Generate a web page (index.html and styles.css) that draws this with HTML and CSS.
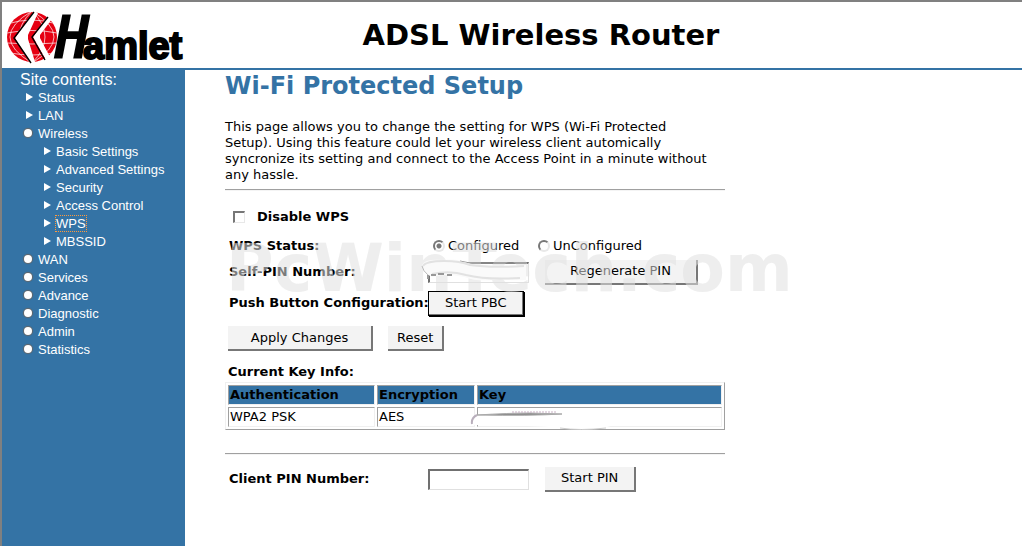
FILE: index.html
```
<!DOCTYPE html>
<html lang="en">
<head>
    <meta charset="UTF-8">
    <meta name="viewport" content="width=device-width, initial-scale=1.0">
    <title>ADSL Wireless Router</title>
    <link rel="stylesheet" href="styles.css">
</head>
<body>
    <header class="top">
        <svg class="logo" width="184" height="58" viewBox="0 0 184 58" role="img" aria-label="Hamlet">
            <defs>
                <clipPath id="globe"><circle cx="30" cy="30" r="25"/></clipPath>
            </defs>
            <g clip-path="url(#globe)">
                <rect x="4" y="4" width="52" height="52" fill="#e60012"/>
                <g fill="none" stroke="#fff" stroke-width="0.7">
                    <path d="M5 17Q30 9 55 17M5 26Q30 21 55 26M5 36Q30 38 55 36M8 46Q30 50 52 46"/>
                    <path d="M30 4Q4 30 30 56M30 4Q-14 30 30 56M30 4Q56 30 30 56M30 4Q74 30 30 56"/>
                </g>
            </g>
            <path d="M32 4L13 31L29 57L33 55L26 32L26 28L36 6Z" fill="#fff"/>
            <path d="M46 9L31 30L44 53L48 50L38 31L38 28L50 12Z" fill="#fff"/>
            <path d="M32 5L12 31L29 56M46 10L30 30L43 53" fill="none" stroke="#000" stroke-width="1.4"/>
            <text><tspan class="logo-h" x="52" y="52">H</tspan><tspan class="logo-rest" x="81" y="52">amlet</tspan></text>
        </svg>
        <h1>ADSL Wireless Router</h1>
    </header>

    <div class="page">
        <nav class="menu">
            <p>Site contents:</p>
            <ul>
                <li class="leaf"><a href="#">Status</a></li>
                <li class="leaf"><a href="#">LAN</a></li>
                <li class="folder"><a href="#">Wireless</a>
                    <ul>
                        <li class="leaf"><a href="#">Basic Settings</a></li>
                        <li class="leaf"><a href="#">Advanced Settings</a></li>
                        <li class="leaf"><a href="#">Security</a></li>
                        <li class="leaf"><a href="#">Access Control</a></li>
                        <li class="leaf"><a class="current" href="#">WPS</a></li>
                        <li class="leaf"><a href="#">MBSSID</a></li>
                    </ul>
                </li>
                <li class="folder"><a href="#">WAN</a></li>
                <li class="folder"><a href="#">Services</a></li>
                <li class="folder"><a href="#">Advance</a></li>
                <li class="folder"><a href="#">Diagnostic</a></li>
                <li class="folder"><a href="#">Admin</a></li>
                <li class="folder"><a href="#">Statistics</a></li>
            </ul>
        </nav>

        <main>
            <h2>Wi-Fi Protected Setup</h2>
            <p class="intro">This page allows you to change the setting for WPS (Wi-Fi Protected<br>
                Setup). Using this feature could let your wireless client automically<br>
                syncronize its setting and connect to the Access Point in a minute without<br>
                any hassle.</p>
            <hr>

            <form>
                <div class="disable">
                    <input type="checkbox" id="disableWps">
                    <label for="disableWps">Disable WPS</label>
                </div>

                <div class="row status">
                    <b>WPS Status:</b>
                    <div class="choice">
                        <input type="radio" name="status" id="configured" checked>
                        <label for="configured">Configured</label>
                    </div>
                    <div class="choice second">
                        <input type="radio" name="status" id="unconfigured">
                        <label for="unconfigured">UnConfigured</label>
                    </div>
                </div>
                <div class="row pin">
                    <label for="selfPin">Self-PIN Number:</label>
                    <div class="smudged">
                        <input type="text" id="selfPin">
                        <svg class="smudge" width="112" height="28" viewBox="0 0 112 28" aria-hidden="true">
                            <path d="M2 8Q4 2 22 3Q38 1 52 7Q80 10 106 8V23Q94 24 80 22Q60 26 44 20Q26 16 12 20Q3 16 2 8Z" fill="#fafafa"/>
                            <path d="M40 4L50 6H106" fill="none" stroke="#999"/>
                            <path d="M3 9Q6 4 24 4Q40 4 50 8Q70 11 104 9M12 17Q30 13 46 18Q66 23 100 21" fill="none" stroke="#e2e2e2" stroke-width="2"/>
                            <path d="M2 9Q3 14 8 18" fill="none" stroke="#bbb"/>
                            <path d="M8 18V22M11 18h5M18 17h6M27 18h5" fill="none" stroke="#999" stroke-width="2"/>
                        </svg>
                    </div>
                    <button type="button" class="wide">Regenerate PIN</button>
                </div>
                <div class="row pbc">
                    <b>Push Button Configuration:</b>
                    <button type="button" class="default">Start PBC</button>
                </div>
                <div class="actions">
                    <button type="button" class="apply">Apply Changes</button>
                    <button type="reset">Reset</button>
                </div>

                <div class="keys">
                    <table>
                        <caption>Current Key Info:</caption>
                        <thead>
                            <tr><th class="auth">Authentication</th><th class="enc">Encryption</th><th>Key</th></tr>
                        </thead>
                        <tbody>
                            <tr><td>WPA2 PSK</td><td>AES</td><td></td></tr>
                        </tbody>
                    </table>
                    <svg class="key-smudge" width="160" height="24" viewBox="0 0 160 24" aria-hidden="true">
                        <path d="M3 18L5 8H110Q136 4 158 10Q140 24 110 22Q60 18 3 18Z" fill="#fff"/>
                        <path d="M2 17Q1 11 7 8" fill="none" stroke="#b9afbc" stroke-width="2"/>
                        <path d="M7 8Q60 9 92 7L60 6Q40 6 7 8Z" fill="#888" stroke="#aaa"/>
                        <path d="M42 5H86" stroke="#c8b0c4" stroke-dasharray="2 1"/>
                        <path d="M90 21Q110 24 136 21" fill="none" stroke="#ccc"/>
                    </svg>
                </div>
                <hr>

                <div class="row client">
                    <label for="clientPin">Client PIN Number:</label>
                    <input type="text" id="clientPin">
                    <button type="button">Start PIN</button>
                </div>
            </form>
            <div class="watermark" aria-hidden="true">PcWinTech.com</div>
        </main>
    </div>
</body>
</html>
```
FILE: styles.css
```
* {
    box-sizing: border-box;
}

body {
    margin: 0;
    min-height: 100vh;
    display: flex;
    flex-direction: column;
    border-top: 2px solid #808080;
    border-left: 2px solid #808080;
    background: #fff;
    color: #000;
    font: 13px/16px Verdana, "DejaVu Sans", sans-serif;
}

.top {
    display: flex;
    align-items: center;
    height: 68px;
    border-bottom: 2px solid #3473a5;
}

.logo {
    flex: none;
    margin-top: 2px;
    overflow: visible;
}

.logo-h {
    font: italic bold 60px "DejaVu Sans Mono", monospace;
}

.logo-rest {
    font: bold 38px "Liberation Sans", sans-serif;
    stroke: #000;
    stroke-width: 2px;
}

h1 {
    flex: 1;
    margin: 0;
    padding-right: 126px;
    text-align: center;
    font-size: 29px;
    line-height: 40px;
}

.page {
    flex: 1;
    display: flex;
}

.menu {
    width: 183px;
    flex: none;
    padding-left: 18px;
    background: #3473a5;
    color: #fff;
    font: 13px/18px "Liberation Sans", Arial, sans-serif;
}

.menu p {
    margin: 0;
    font-size: 16px;
    line-height: 19px;
}

.menu ul {
    margin: 0;
    padding: 0;
    list-style: none;
}

.menu li {
    position: relative;
    padding-left: 18px;
}

.menu a {
    color: #fff;
    text-decoration: none;
}

.menu .current {
    outline: 1px dotted #ff9a3c;
}

.leaf::before,
.folder::before {
    content: "";
    position: absolute;
}

.leaf::before {
    left: 6px;
    top: 4px;
    border-left: 7px solid #fff;
    border-top: 4px solid transparent;
    border-bottom: 4px solid transparent;
}

.folder::before {
    left: 4px;
    top: 4px;
    width: 8px;
    height: 8px;
    border-radius: 50%;
    background: #fff;
    box-shadow: 0 0 1px 1px #666;
}

main {
    position: relative;
    flex: 1;
    padding: 0 40px;
}

h2 {
    margin: 0;
    color: #3473a5;
    font-size: 24px;
    line-height: 32px;
}

.intro {
    max-width: 500px;
    margin: 17px 0 6px;
}

hr {
    max-width: 500px;
    height: 2px;
    margin: 0;
    border: 0;
    border-top: 1px solid #a0a0a0;
    border-bottom: 1px solid #f4f4f4;
}

form {
    padding-top: 17px;
}

label,
button,
input {
    font: inherit;
}

.disable {
    display: flex;
    align-items: center;
    gap: 12px;
    height: 18px;
    padding-left: 8px;
    font-weight: bold;
}

.row {
    display: grid;
    grid-template-columns: 199px 117px 1fr;
    align-items: center;
    padding-left: 4px;
}

.row > label,
.row > b {
    font-weight: bold;
    white-space: nowrap;
}

.status {
    margin-top: 8px;
    height: 24px;
}

.pin {
    height: 28px;
}

.pbc {
    height: 34px;
}

.choice {
    display: flex;
    align-items: center;
    gap: 3px;
    padding-left: 5px;
}

.choice.second {
    padding-left: 0;
    margin-left: -7px;
}

input[type="checkbox"],
input[type="radio"] {
    appearance: none;
    width: 12px;
    height: 12px;
    margin: 0;
    border: 1px solid #e8e8e8;
    background: #fff;
}

input[type="checkbox"] {
    border-top: 2px solid #777;
    border-left: 2px solid #777;
}

input[type="radio"] {
    border: 2px solid #e8e8e8;
    border-top-color: #777;
    border-left-color: #777;
    border-radius: 50%;
}

input[type="radio"]:checked {
    background: radial-gradient(#777 2px, #fff 3px);
}

input[type="text"] {
    display: block;
    width: 101px;
    height: 21px;
    padding: 1px 2px;
    border: 1px solid #e0e0e0;
    border-top: 2px solid #707070;
    border-left: 2px solid #707070;
    border-radius: 0;
}

button {
    justify-self: start;
    height: 25px;
    padding: 0 16px;
    border: 0;
    border-right: 2px solid #777;
    border-bottom: 2px solid #777;
    border-radius: 0;
    background: #f3f3f3;
    color: #000;
    white-space: nowrap;
}

button.wide {
    width: 153px;
}

button.default {
    border: 1px solid #000;
    box-shadow: inset -1px -1px #777, 1px 1px #000;
}

.smudged,
.keys {
    position: relative;
}

.smudge {
    position: absolute;
    z-index: 1;
    left: -8px;
    top: -5px;
}

.actions {
    display: flex;
    gap: 15px;
    margin-top: 6px;
    padding-left: 3px;
}

.actions button {
    padding: 0 9px;
}

.actions button.apply {
    width: 145px;
}

.keys {
    max-width: 500px;
    margin: 13px 0 23px;
}

table {
    width: 100%;
    border: 1px solid #a0a0a0;
    border-top-color: #f0f0f0;
    border-left-color: #f0f0f0;
    border-spacing: 2px;
}

caption {
    padding: 0 3px 2px;
    font-weight: bold;
    text-align: left;
}

th,
td {
    height: 20px;
    padding: 1px;
    border: 1px solid #f0f0f0;
    border-top-color: #a0a0a0;
    border-left-color: #a0a0a0;
    text-align: left;
}

th {
    background: #3473a5;
}

.auth {
    width: 147px;
}

.enc {
    width: 98px;
}

.key-smudge {
    position: absolute;
    left: 245px;
    bottom: -1px;
}

.client {
    margin-top: 10px;
    height: 28px;
}

.watermark {
    position: absolute;
    left: 41px;
    top: 156px;
    color: rgba(224, 224, 224, 0.55);
    font: bold 65px/86px "DejaVu Sans", sans-serif;
    pointer-events: none;
}
```
